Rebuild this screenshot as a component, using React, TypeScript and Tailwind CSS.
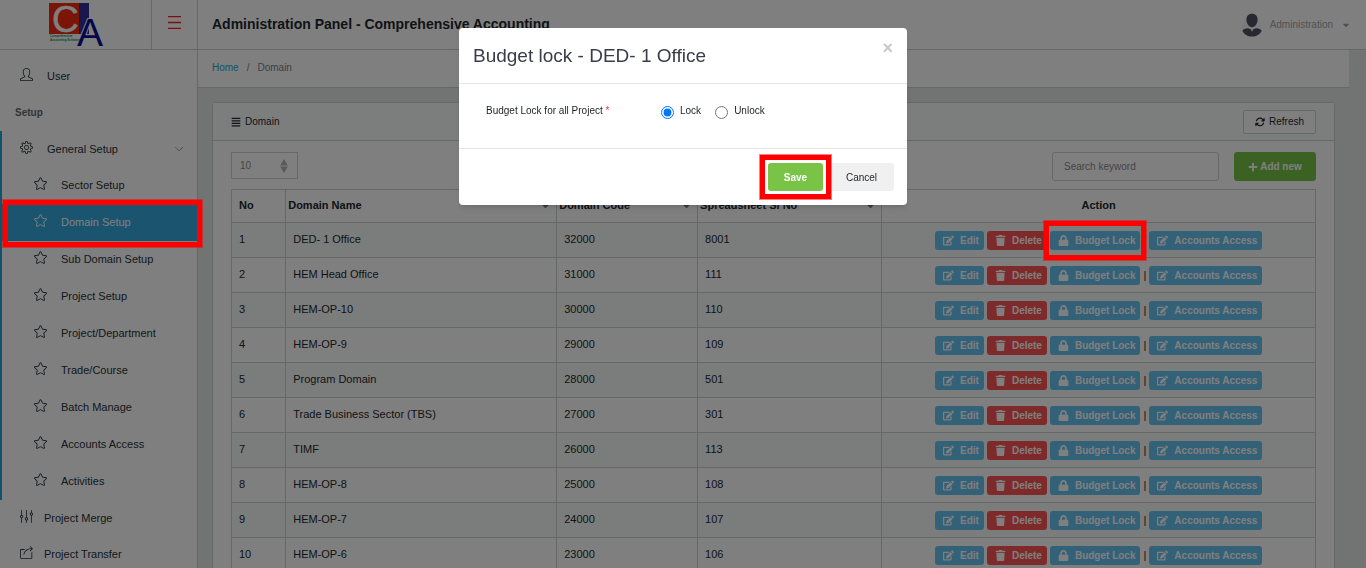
import type { ReactNode } from "react";
import { SlArrowDown, SlEqualizer, SlSettings, SlShareAlt, SlStar, SlUser } from "react-icons/sl";
import { FaAlignJustify, FaCaretDown, FaEdit, FaLock, FaPlus, FaTrash } from "react-icons/fa";
import { FaArrowsRotate } from "react-icons/fa6";

const setupLinks = [
  "Sector Setup",
  "Domain Setup",
  "Sub Domain Setup",
  "Project Setup",
  "Project/Department",
  "Trade/Course",
  "Batch Manage",
  "Accounts Access",
  "Activities",
];

const domains = [
  ["DED- 1 Office", "32000", "8001"],
  ["HEM Head Office", "31000", "111"],
  ["HEM-OP-10", "30000", "110"],
  ["HEM-OP-9", "29000", "109"],
  ["Program Domain", "28000", "501"],
  ["Trade Business Sector (TBS)", "27000", "301"],
  ["TIMF", "26000", "113"],
  ["HEM-OP-8", "25000", "108"],
  ["HEM-OP-7", "24000", "107"],
  ["HEM-OP-6", "23000", "106"],
];

function Highlight({ className }: { className: string }) {
  return (
    <span
      aria-hidden="true"
      className={`pointer-events-none absolute z-50 border-[5px] border-[#ff0000] outline outline-[#ff000080] ${className}`}
    />
  );
}

function Logo() {
  return (
    <svg viewBox="0 0 56 48" className="h-12 w-14 overflow-visible" role="img" aria-label="CA">
      <rect x="1" y="3" width="30" height="31" fill="#f42a10" />
      <rect x="31" y="3" width="10" height="31" fill="#33309c" />
      <text x="4" y="32" fontFamily="Liberation Sans, sans-serif" fontSize="37" fill="#fff" stroke="#fff" strokeWidth="0.5">C</text>
      <text x="29" y="46" fontFamily="Liberation Sans, sans-serif" fontSize="39" fill="#0a0a96" stroke="#fff" strokeWidth="2" paintOrder="stroke">A</text>
      <text x="2" y="37" fontFamily="Liberation Sans, sans-serif" fontWeight="bold" fontSize="3" fill="#16914a">Comprehensive</text>
      <text x="2" y="41" fontFamily="Liberation Sans, sans-serif" fontWeight="bold" fontSize="3" fill="#16914a">Accounting Software</text>
    </svg>
  );
}

function Avatar() {
  return (
    <svg viewBox="0 0 20 24" className="h-6 w-5" aria-hidden="true">
      <circle cx="10" cy="13" r="10" fill="#f8f8f8" />
      <path d="M10 0.8c3.500 0 5.600 2.300 5.600 5.800 0 3.600-2.300 7.800-5.600 7.800S4.400 10.200 4.400 6.600C4.400 3.100 6.500.8 10 .8z" fill="#4e5264" />
      <path d="M6 15.200 8.700 16.200 10 18.700l1.300-2.500 2.700-1c2.800.3 5 1.100 5.700 2.600C18 21.500 14.300 23.600 10 23.600S2 21.500.4 17.800c.7-1.500 2.800-2.300 5.600-2.600z" fill="#4e5264" />
    </svg>
  );
}

function ActionButton({ icon, label, tone = "info", children }: { icon: ReactNode; label: string; tone?: "info" | "danger"; children?: ReactNode }) {
  const color = tone === "info" ? "bg-[#67c2ef]" : "bg-[#ff5454]";
  return (
    <button
      type="button"
      className={`relative flex h-[19px] items-center gap-1.5 rounded-[3px] pr-[5px] pl-2 text-[10px] font-bold whitespace-nowrap text-white [&_svg]:h-[11px] [&_svg]:w-auto ${color}`}
    >
      {icon}
      {label}
      {children}
    </button>
  );
}

function SortableHeader({ label }: { label: string }) {
  return (
    <th scope="col" className="border border-[#cdd1d0] px-0.5 pb-0.5 text-left">
      <span className="flex items-center justify-between">
        {label}
        <FaCaretDown className="mr-0.5 text-[13px] text-[#777]" />
      </span>
    </th>
  );
}

function Sidebar() {
  return (
    <nav aria-label="Main" className="w-[198px] shrink-0 border-r border-[#cdd1d0] bg-white pt-2 text-[11px] text-[#263238]">
      <a href="#user" className="flex h-9 items-center gap-3.5 pl-5">
        <SlUser className="mb-1 text-[13px]" />
        User
      </a>
      <h2 className="flex h-[37px] items-center pl-[15px] text-[10px] font-bold text-[#666]">Setup</h2>
      <div className="border-l-2 border-[#20a8d8]">
        <button type="button" aria-expanded="true" className="flex h-9 w-full items-center gap-3.5 pr-3.5 pl-[18px]">
          <SlSettings className="mb-1 text-[13px]" />
          General Setup
          <SlArrowDown className="ml-auto text-[8px] text-[#777]" />
        </button>
        <ul>
          {setupLinks.map((label) => {
            const active = label === "Domain Setup";
            return (
              <li key={label} className="relative">
                <a
                  href="#setup"
                  aria-current={active ? "page" : undefined}
                  className={`flex h-[37px] items-center gap-3.5 pl-8 ${active ? "bg-[#36a9dc] text-white" : ""}`}
                >
                  <SlStar className="mb-1 text-[13px]" />
                  {label}
                </a>
                {active && <Highlight className="-top-1 -right-[5px] -bottom-1.5 left-px" />}
              </li>
            );
          })}
        </ul>
      </div>
      <a href="#merge" className="flex h-9 items-center gap-[11px] pl-5">
        <SlEqualizer className="mb-1 text-[13px]" />
        Project Merge
      </a>
      <a href="#transfer" className="flex h-9 items-center gap-[11px] pl-5">
        <SlShareAlt className="mb-1 text-[13px]" />
        Project Transfer
      </a>
    </nav>
  );
}

function DomainTable() {
  return (
    <table className="mt-2 w-full table-fixed border-collapse text-[11px] text-[#23282c]">
      <colgroup>
        <col className="w-[5%]" />
        <col className="w-[25%]" />
        <col className="w-[13%]" />
        <col className="w-[17%]" />
        <col className="w-[40%]" />
      </colgroup>
      <thead>
        <tr className="h-[33px]">
          <th scope="col" className="border border-[#cdd1d0] px-[7px] pb-0.5 text-left">No</th>
          <SortableHeader label="Domain Name" />
          <SortableHeader label="Domain Code" />
          <SortableHeader label="Spreadsheet Sl No" />
          <th scope="col" className="border border-[#cdd1d0] pb-0.5">Action</th>
        </tr>
      </thead>
      <tbody>
        {domains.map(([name, code, serial], i) => (
          <tr key={name} className="h-[35px] odd:bg-[#f6f9f8]">
            <td className="border border-[#cdd1d0] px-[7px] pb-0.5">{i + 1}</td>
            <td className="border border-[#cdd1d0] px-[7px] pb-0.5">{name}</td>
            <td className="border border-[#cdd1d0] px-[7px] pb-0.5">{code}</td>
            <td className="border border-[#cdd1d0] px-[7px] pb-0.5">{serial}</td>
            <td className="border border-[#cdd1d0]">
              <div className="flex items-center justify-center gap-[3px]">
                <ActionButton icon={<FaEdit />} label="Edit" />
                <ActionButton icon={<FaTrash />} label="Delete" tone="danger" />
                <ActionButton icon={<FaLock />} label="Budget Lock">
                  {i === 0 && <Highlight className="-inset-x-1.5 -inset-y-2.5" />}
                </ActionButton>
                <span>|</span>
                <ActionButton icon={<FaEdit />} label="Accounts Access" />
              </div>
            </td>
          </tr>
        ))}
      </tbody>
    </table>
  );
}

function BudgetLockDialog() {
  return (
    <div className="fixed inset-0 z-40 flex items-start justify-center bg-black/50 pt-7">
      <form role="dialog" aria-modal="true" aria-labelledby="dialog-title" className="w-[448px] rounded bg-white text-[10px] text-[#23282c] shadow-md">
        <header className="flex h-14 items-start justify-between border-b border-[#e4e5e6] px-3.5">
          <h2 id="dialog-title" className="pt-3.5 text-[19px] leading-7 text-[#3a3d48]">Budget lock - DED- 1 Office</h2>
          <button type="button" aria-label="Close" className="pt-2.5 text-lg leading-5 font-bold text-[#c8c8c8]">×</button>
        </header>
        <fieldset className="flex h-[65px] items-start border-b border-[#e4e5e6] pt-[19px] pl-[27px]">
          <span className="w-[175px] leading-4">
            Budget Lock for all Project <span className="text-[#f33]">*</span>
          </span>
          <label className="flex items-start gap-1.5 leading-4">
            <input type="radio" name="lock" defaultChecked className="mt-[3px] size-[13px]" />
            Lock
          </label>
          <label className="ml-3.5 flex items-start gap-1.5 leading-4">
            <input type="radio" name="lock" className="mt-[3px] size-[13px]" />
            Unlock
          </label>
        </fieldset>
        <footer className="flex justify-end gap-1.5 px-[13px] py-3.5">
          <button type="submit" className="relative h-7 w-[55px] rounded-[3px] bg-[#79c447] font-bold text-white">
            Save
            <Highlight className="-inset-x-2 -inset-y-2" />
          </button>
          <button type="button" className="h-7 w-[65px] rounded-[3px] bg-[#f0f0f0]">Cancel</button>
        </footer>
      </form>
    </div>
  );
}

export default function App() {
  return (
    <div className="flex h-screen flex-col overflow-hidden bg-[#e4e9e8] font-['Liberation_Sans',Arial,sans-serif]">
      <header className="flex h-[50px] shrink-0 items-stretch border-b border-[#cdd1d0] bg-white">
        <a href="#home" className="flex w-[152px] shrink-0 border-r border-[#cdd1d0] pl-12">
          <Logo />
        </a>
        <button type="button" aria-label="Toggle sidebar" className="flex w-[46px] shrink-0 items-center justify-center border-r border-[#cdd1d0] pb-1">
          <svg viewBox="0 0 13 13" className="size-[13px]" aria-hidden="true">
            <path d="M0 .5h13M0 6.500h13M0 12.500h13" stroke="#ff1e1e" strokeWidth="1.3" />
          </svg>
        </button>
        <h1 className="flex items-center pl-3.5 text-[14px] font-bold text-[#23282c]">Administration Panel - Comprehensive Accounting</h1>
        <button type="button" className="ml-auto flex items-center gap-2 pr-[15px] text-[10px] text-[#a5a5a5]">
          <Avatar />
          Administration
          <FaCaretDown />
        </button>
      </header>

      <div className="flex min-h-0 flex-1">
        <Sidebar />
        <main className="min-w-0 flex-1 pr-[17px] text-[10px] text-[#23282c]">
          <nav aria-label="Breadcrumb" className="flex h-[38px] items-center gap-2 border-b border-[#cdd1d0] bg-white pb-0.5 pl-3.5">
            <a href="#home" className="text-[#20a8d8]">Home</a>
            <span className="text-[#73818f]">/</span>
            <span className="text-[#73818f]">Domain</span>
          </nav>
          <section className="mx-3.5 mt-3.5 rounded-[3px] border border-[#cdd1d0] bg-white">
            <header className="flex h-[38px] items-center justify-between border-b border-[#cdd1d0] bg-[#f9fcfb] px-[18px]">
              <h2 className="flex items-center gap-1">
                <FaAlignJustify />
                Domain
              </h2>
              <button type="button" className="flex h-6 items-center gap-1 rounded-xs border border-[#cdd1d0] bg-white px-[11px]">
                <FaArrowsRotate />
                Refresh
              </button>
            </header>
            <div className="px-[18px] py-[11px]">
              <div className="flex items-start">
                <div className="relative">
                  <select aria-label="Rows per page" className="h-[27px] w-[67px] appearance-none border border-[#cdd1d0] bg-white pl-2 text-[#8a8a8a]">
                    <option>10</option>
                  </select>
                  <svg viewBox="0 0 8 14" className="pointer-events-none absolute top-[7px] right-2.5 h-3.5 w-2" aria-hidden="true">
                    <path d="M4 0l3.800 6.600H.2zM4 14 .2 7.400h7.600z" fill="#b4b4b4" />
                  </svg>
                </div>
                <input type="search" aria-label="Search" placeholder="Search keyword" className="ml-auto h-[29px] w-[167px] rounded-[3px] border border-[#cdd1d0] px-[11px] placeholder:text-[#8a8a8a]" />
                <button type="button" className="ml-[15px] flex h-[29px] w-[82px] items-center justify-center gap-0.5 rounded-[3px] bg-[#79c447] font-bold text-white">
                  <FaPlus />
                  Add new
                </button>
              </div>
              <DomainTable />
            </div>
          </section>
        </main>
      </div>
      <BudgetLockDialog />
    </div>
  );
}
